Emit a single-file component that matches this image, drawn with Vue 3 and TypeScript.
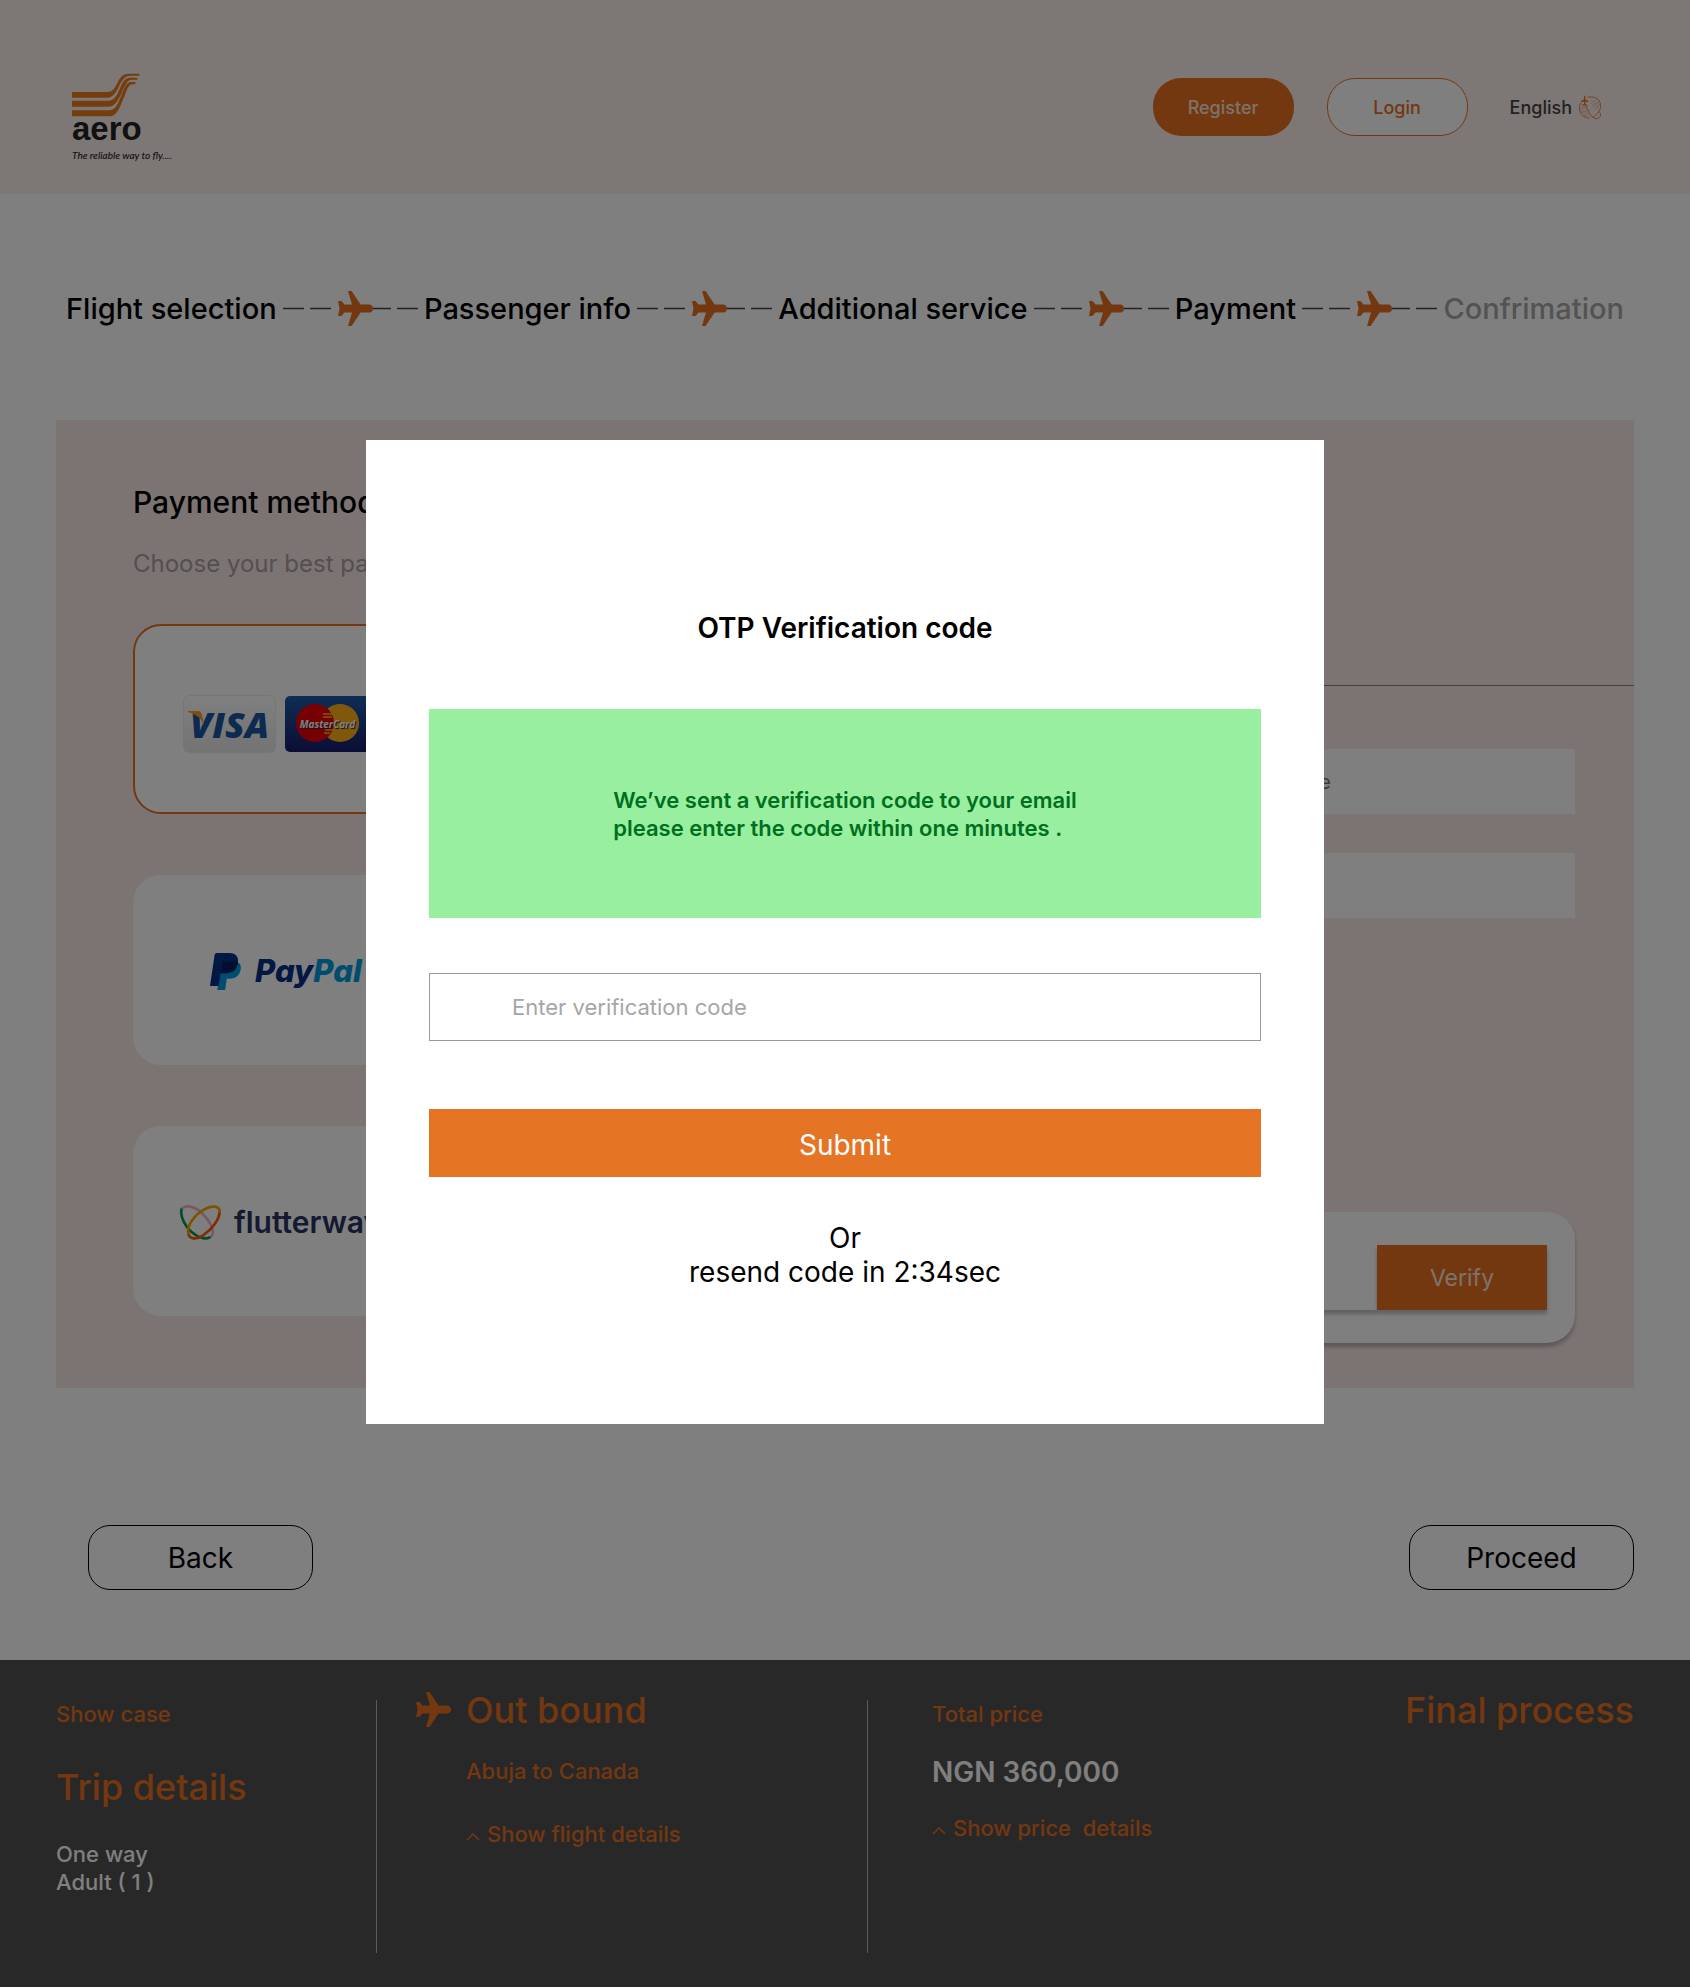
<script setup lang="ts">
import { ref } from 'vue'

interface Step {
  label: string
  done: boolean
}

const steps: Step[] = [
  { label: 'Flight selection', done: true },
  { label: 'Passenger info', done: true },
  { label: 'Additional service', done: true },
  { label: 'Payment', done: true },
  { label: 'Confrimation', done: false },
]

const planePath =
  'M0 10h3.5l3 3.5H14L10 0h3.6l9 13.5H32q3 1 3 4t-3 4h-9.4l-9 13.5H10l4-13.5H6.5l-3 3.5H0l1.5-7.5z'

const method = ref<string>('card')
const code = ref<string>('')
</script>

<template>
  <div class="page">
    <header class="top">
      <a class="brand" href="#" aria-label="aero home">
        <svg class="brand-mark" viewBox="69 70 204 132" aria-hidden="true">
          <path d="M69 127H175C190 127 195 118 202 106C212 88 216 72 240 72H271V78H245C228 78 222 88 212 106C202 128 192 144 175 144H69Z" />
          <path d="M69 153H178C195 153 202 140 210 122C220 100 225 84 245 84H265V90H248C235 90 230 103 220 125C208 152 198 171 180 171H69Z" />
          <path d="M69 182H180C198 182 206 165 215 142C225 118 230 97 246 97H259V104H250C240 104 236 115 228 135C212 172 206 200 180 200H69Z" />
        </svg>
        <span class="brand-name">aero</span>
        <span class="brand-tag">The reliable way to fly....</span>
      </a>
      <nav class="top-nav">
        <button type="button" class="pill pill-solid">Register</button>
        <button type="button" class="pill pill-line">Login</button>
        <a class="lang" href="#">
          English
          <svg class="globe" viewBox="1342 96 76 80" aria-hidden="true">
            <g fill="none" stroke="#e67021" stroke-width="2.5">
              <path d="M1372 103C1400 98 1415 114 1414 132C1413 146 1402 158 1390 168" />
              <path d="M1350 121C1340 140 1348 168 1378 170" />
              <path d="M1370 128C1368 142 1380 158 1390 168" />
              <path d="M1386 164C1396 176 1412 172 1414 160C1415 154 1411 150 1406 150" />
            </g>
            <g fill="none" stroke="#e67021" stroke-width="1.5" opacity=".7">
              <path d="M1347 134l34 34M1348 144l22 24M1350 126l20 20M1356 124l14 14M1352 152l30-8M1350 140l22-8M1360 162l18-8M1384 112l24 24M1392 110l20 20M1380 118l24 24M1410 112l-26 26M1414 124l-22 22" />
            </g>
            <path d="M1361 98h4v12l10 5v4l-10-2v7l5 3v3l-7-1-7 1v-3l5-3v-7l-10 2v-4l10-5z" fill="#e67021" />
          </svg>
        </a>
      </nav>
    </header>

    <main>
      <ol class="steps">
        <template v-for="(step, i) in steps" :key="step.label">
          <li v-if="i > 0" class="step-link" aria-hidden="true">
            <svg viewBox="0 0 135 35">
              <path d="M0 17.5h21M27 17.5h21M88 17.5h20M114 17.5h21" stroke="#444" stroke-width="1.5" />
              <path :d="planePath" fill="#e67021" transform="translate(55 0)" />
            </svg>
          </li>
          <li class="step" :class="{ pending: !step.done }">{{ step.label }}</li>
        </template>
      </ol>

      <section class="panel">
        <div class="methods">
          <h2>Payment method</h2>
          <p class="hint">Choose your best payment</p>
          <div class="method-list">
            <button type="button" class="method cards" :class="{ active: method === 'card' }" aria-label="Visa or MasterCard" @click="method = 'card'">
              <span class="visa">
                <svg class="visa-tip" viewBox="0 0 16 14" aria-hidden="true"><path d="M0 0h10q3 0 4 4l2 10Q12 4 0 1z" fill="#f7a021" /></svg>
                VISA
              </span>
              <span class="master">
                <svg viewBox="0 0 91 56" aria-hidden="true">
                  <circle cx="55" cy="27" r="19" fill="#ffb116" />
                  <circle cx="30" cy="27" r="19" fill="#ee0005" />
                  <path d="M38 18h9M38 21h9M40 34h8M39 37h6" stroke="#ffb116" stroke-width="1.5" />
                </svg>
                <span class="master-name">MasterCard</span>
              </span>
            </button>
            <button type="button" class="method paypal" :class="{ active: method === 'paypal' }" @click="method = 'paypal'">
              <svg class="paypal-mark" viewBox="0 0 94 112" aria-hidden="true">
                <path d="M36 28h48q12 6 9 22c-4 20-16 28-34 28h-8l-5 34H22z" fill="#009cde" />
                <path d="M20 0h38c22 0 30 14 26 30-4 20-18 31-36 31H32l-6 39H0L14 6q1-6 6-6z" fill="#003087" />
                <path d="M38 26h46q2 2 0 8c-4 18-18 27-36 27H33z" fill="#001c64" />
              </svg>
              <span class="paypal-name">Pay<span>Pal</span></span>
            </button>
            <button type="button" class="method flutter" :class="{ active: method === 'flutter' }" @click="method = 'flutter'">
              <svg class="flutter-mark" viewBox="0 0 128 106" fill="none" stroke-width="8" stroke-linecap="round" aria-hidden="true">
                <path d="M7 12C0 34 20 72 48 90C64 101 82 104 92 98" stroke="#009a46" />
                <path d="M10 9C24-2 50 6 70 26C92 48 108 76 98 94" stroke="#f5afcb" />
                <path d="M122 20C122 44 98 74 72 92C52 106 30 104 27 86" stroke="#ff5805" />
                <path d="M27 86C22 62 46 30 74 14C98 0 122 2 122 20" stroke="#ffa500" />
              </svg>
              <span class="flutter-name">flutterwave</span>
            </button>
          </div>
        </div>

        <div class="details">
          <div class="fields">
            <input type="text" placeholder="Card holder name" aria-label="Card holder name" />
            <input type="text" aria-label="Card number" />
          </div>
          <div class="verify">
            <input type="text" aria-label="Security code" />
            <button type="button">Verify</button>
          </div>
        </div>
      </section>

      <div class="actions">
        <button type="button">Back</button>
        <button type="button">Proceed</button>
      </div>
    </main>

    <footer class="summary">
      <div class="col low trip">
        <p class="small accent">Show case</p>
        <h3 class="accent">Trip details</h3>
        <p class="small">One way<br />Adult ( 1 )</p>
      </div>
      <div class="rule"></div>
      <div class="col outbound">
        <svg class="plane" viewBox="0 0 35 35" aria-hidden="true"><path :d="planePath" fill="#e67021" /></svg>
        <div>
          <h3 class="accent">Out bound</h3>
          <p class="small accent route">Abuja to Canada</p>
          <a class="small accent toggle" href="#">
            <svg viewBox="0 0 14 8" aria-hidden="true"><path d="M1 7l6-6 6 6" /></svg>Show flight details
          </a>
        </div>
      </div>
      <div class="rule"></div>
      <div class="col low price">
        <p class="small accent">Total price</p>
        <p class="amount">NGN 360,000</p>
        <a class="small accent toggle" href="#">
          <svg viewBox="0 0 14 8" aria-hidden="true"><path d="M1 7l6-6 6 6" /></svg>Show price&nbsp; details
        </a>
      </div>
      <div class="col final">
        <h3 class="accent">Final process</h3>
      </div>
    </footer>

    <div class="overlay">
      <form class="modal" role="dialog" aria-modal="true" aria-labelledby="otp-title" @submit.prevent>
        <h1 id="otp-title">OTP Verification code</h1>
        <div class="notice">
          <p>We’ve sent a verification code to your email<br />please enter the code within one minutes .</p>
        </div>
        <input v-model="code" type="text" placeholder="Enter verification code" aria-label="Verification code" />
        <button type="submit">Submit</button>
        <p class="resend">Or<br />resend code in 2:34sec</p>
      </form>
    </div>
  </div>
</template>

<style>
body {
  margin: 0;
  background: #fff;
}
</style>

<style scoped>
.page {
  position: relative;
  font-family: Inter, 'Liberation Sans', sans-serif;
  color: #000;
  background: #fff;
}
.page * {
  box-sizing: border-box;
}
h1, h2, h3, p, ol {
  margin: 0;
  padding: 0;
  font-weight: 400;
}
button, input {
  font-family: inherit;
  border: 0;
  margin: 0;
  padding: 0;
  border-radius: 0;
}
button {
  cursor: pointer;
}
a {
  color: inherit;
  text-decoration: none;
}
svg {
  display: block;
}

.top {
  display: flex;
  justify-content: space-between;
  align-items: flex-start;
  height: 194px;
  padding: 73px 88px 0 72px;
  background: #faf0ed;
}
.brand {
  display: flex;
  flex-direction: column;
}
.brand-mark {
  width: 68px;
  height: 44px;
  fill: #e67a1c;
}
.brand-name {
  font: 700 33px/24px 'Liberation Sans', Arial, sans-serif;
  color: #222;
}
.brand-tag {
  margin-top: 8px;
  font: italic 500 10px/12px Lato, sans-serif;
  color: #222;
}
.top-nav {
  display: flex;
  align-items: center;
  padding-top: 5px;
}
.pill {
  width: 141px;
  height: 58px;
  border-radius: 28px;
  font-size: 18px;
  font-weight: 500;
}
.pill-solid {
  background: #e67021;
  color: #fbe5d8;
}
.pill-line {
  margin-left: 33px;
  background: #fff;
  border: 1px solid #e67021;
  color: #e67021;
}
.lang {
  display: flex;
  align-items: center;
  gap: 6px;
  margin-left: 42px;
  font-size: 18px;
  font-weight: 500;
  color: #444;
}
.globe {
  width: 24px;
  height: 25px;
}

.steps {
  display: flex;
  justify-content: space-between;
  align-items: center;
  padding: 97px 66px 94px;
  list-style: none;
}
.step {
  font-size: 29px;
  line-height: 34px;
  font-weight: 500;
  white-space: nowrap;
}
.step.pending {
  color: #a6a6a6;
}
.step-link svg {
  width: 135px;
  height: 35px;
}

.panel {
  display: grid;
  grid-template-columns: 1fr 1fr;
  margin: 0 56px;
  background: #f6e9e7;
}
.methods {
  padding: 65px 0 72px 77px;
}
.methods h2 {
  font-size: 30px;
  line-height: 34px;
  font-weight: 500;
}
.hint {
  margin-top: 31px;
  font-size: 24px;
  line-height: 28px;
  color: #a6a0a0;
}
.method-list {
  display: flex;
  flex-direction: column;
  gap: 61px;
  margin-top: 46px;
}
.method {
  display: flex;
  align-items: center;
  width: 320px;
  height: 190px;
  border: 2px solid #fff;
  border-radius: 28px;
  background: #fff;
}
.method.active {
  border-color: #e67021;
}
.cards {
  gap: 10px;
  padding: 10px 0 0 49px;
}
.visa {
  position: relative;
  width: 91px;
  height: 56px;
  border-radius: 5px;
  background: linear-gradient(#fff, #e8e8e8);
  box-shadow: 0 0 2px #bbb;
  font: italic 800 36px/58px 'Open Sans', sans-serif;
  color: #1a56a0;
}
.visa-tip {
  position: absolute;
  left: 4px;
  top: 15px;
  width: 16px;
  height: 14px;
}
.master {
  position: relative;
  width: 91px;
  height: 56px;
  border-radius: 5px;
  overflow: hidden;
  background: linear-gradient(#1d5ba8, #171b6b);
}
.master-name {
  position: absolute;
  left: 0;
  top: 0;
  width: 85px;
  font: italic 700 10px/56px 'Open Sans', sans-serif;
  color: #fff;
  text-shadow: 1px 1px 1px #222;
}
.paypal {
  gap: 14px;
  padding: 2px 0 0 75px;
}
.paypal-mark {
  width: 31px;
  height: 37px;
}
.paypal-name {
  font-size: 31px;
  line-height: 36px;
  font-style: italic;
  font-weight: 800;
  color: #003087;
}
.paypal-name span {
  color: #009cde;
}
.flutter {
  gap: 12px;
  padding: 2px 0 0 44px;
}
.flutter-mark {
  width: 43px;
  height: 35px;
}
.flutter-name {
  font-size: 30px;
  line-height: 34px;
  font-weight: 600;
  color: #2a3362;
}
.details {
  display: flex;
  flex-direction: column;
  justify-content: space-between;
  margin-top: 265px;
  padding: 63px 59px 45px 305px;
  border-top: 1px solid #8a8080;
}
.fields {
  display: flex;
  flex-direction: column;
  gap: 39px;
}
.fields input {
  width: 100%;
  height: 65px;
  padding-left: 28px;
  background: #fff;
  font-size: 20px;
}
.fields input::placeholder {
  color: #777;
}
.verify {
  display: flex;
  height: 131px;
  padding: 33px 28px;
  border-radius: 28px;
  background: #fff;
  box-shadow: 0 4px 4px rgba(0, 0, 0, 0.25);
}
.verify input {
  flex: 1;
  min-width: 0;
  background: #fff;
  box-shadow: 0 4px 4px rgba(0, 0, 0, 0.25);
}
.verify button {
  width: 170px;
  background: #e67021;
  color: #fbe5d8;
  font-size: 23px;
  box-shadow: 0 4px 4px rgba(0, 0, 0, 0.25);
}

.actions {
  display: flex;
  justify-content: space-between;
  padding: 137px 56px 70px 88px;
}
.actions button {
  width: 225px;
  height: 65px;
  border: 1px solid #000;
  border-radius: 22px;
  background: transparent;
  font-size: 28px;
}

.summary {
  display: grid;
  grid-template-columns: 320fr 1px 490fr 1px 440fr 326fr;
  padding: 28px 56px 34px;
  background: #505050;
  color: #fff;
}
.low {
  padding-top: 12px;
}
.rule {
  height: 253px;
  margin-top: 12px;
  background: #b4b4b4;
}
.small {
  font-size: 22px;
  line-height: 28px;
  font-weight: 500;
}
.accent {
  color: #e67021;
}
.summary h3 {
  font-size: 36px;
  line-height: 44px;
  font-weight: 500;
}
.trip h3 {
  margin: 37px 0 31px;
}
.outbound {
  display: flex;
  align-items: flex-start;
  gap: 15px;
  padding-left: 39px;
}
.plane {
  width: 35px;
  height: 35px;
  margin-top: 4px;
}
.route {
  margin: 25px 0 35px;
}
.toggle {
  display: flex;
  align-items: center;
  gap: 7px;
}
.toggle svg {
  width: 14px;
  height: 8px;
  margin-top: 6px;
  fill: none;
  stroke: currentColor;
  stroke-width: 1.5;
}
.price {
  padding-left: 64px;
}
.amount {
  margin: 27px 0 25px;
  font-size: 28px;
  line-height: 34px;
  font-weight: 600;
}
.final {
  text-align: right;
  white-space: nowrap;
}

.overlay {
  position: absolute;
  inset: 0;
  display: flex;
  justify-content: center;
  align-items: flex-start;
  padding: 440px 24px 24px;
  background: rgba(0, 0, 0, 0.5);
}
.modal {
  display: flex;
  flex-direction: column;
  width: 100%;
  max-width: 958px;
  padding: 171px 63px 135px;
  background: #fff;
}
.modal h1 {
  font-size: 28px;
  line-height: 34px;
  font-weight: 600;
  text-align: center;
}
.notice {
  display: flex;
  justify-content: center;
  align-items: center;
  height: 209px;
  margin-top: 64px;
  background: #98ef9f;
  color: #006f1f;
}
.notice p {
  font-size: 22px;
  line-height: 28px;
  font-weight: 600;
}
.modal input {
  height: 68px;
  margin-top: 55px;
  padding-left: 82px;
  border: 1px solid #999;
  background: #fff;
  font-size: 22px;
}
.modal input::placeholder {
  color: #a6a6a6;
}
.modal button {
  height: 68px;
  margin-top: 68px;
  padding-top: 4px;
  background: #e67425;
  color: #fff;
  font-size: 28px;
}
.resend {
  margin-top: 44px;
  font-size: 28px;
  line-height: 34px;
  text-align: center;
}
</style>
